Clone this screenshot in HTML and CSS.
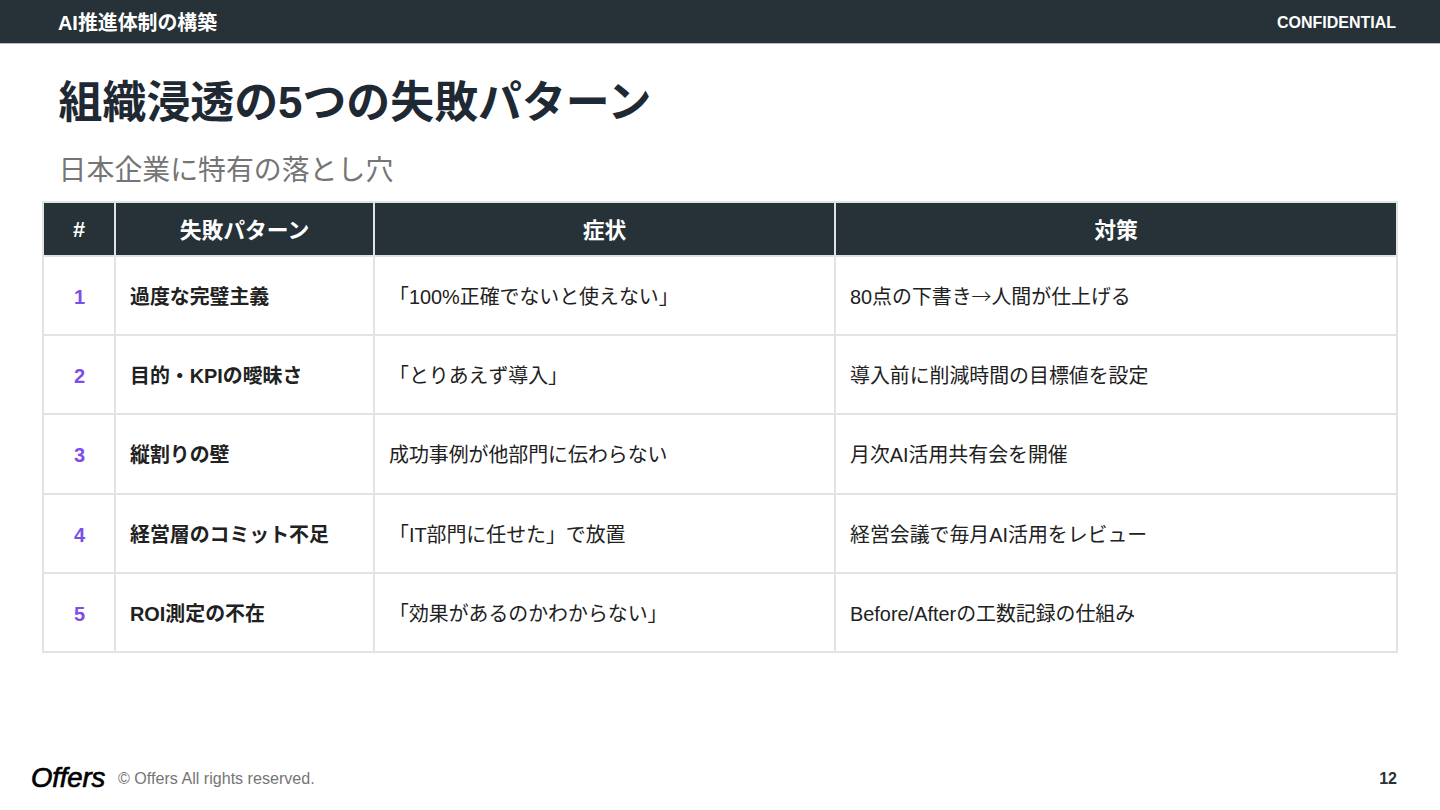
FILE: index.html
```html
<!DOCTYPE html>
<html lang="ja">
<head>
<meta charset="utf-8">
<title>組織浸透の5つの失敗パターン</title>
<link rel="stylesheet" href="styles.css">
</head>
<body>
<div class="slide">
  <header class="topbar">
    <span class="section">AI推進体制の構築</span>
    <span class="confidential">CONFIDENTIAL</span>
  </header>
  <main class="content">
    <h1 class="title">組織浸透の5つの失敗パターン</h1>
    <p class="subtitle">日本企業に特有の落とし穴</p>
    <table class="patterns">
      <colgroup>
        <col class="col-num"><col class="col-name"><col class="col-symptom"><col class="col-action">
      </colgroup>
      <thead>
        <tr><th class="hash">#</th><th>失敗パターン</th><th>症状</th><th>対策</th></tr>
      </thead>
      <tbody>
        <tr><td class="num">1</td><td class="name">過度な完璧主義</td><td>「100%正確でないと使えない」</td><td>80点の下書き<span class="arrow">→</span>人間が仕上げる</td></tr>
        <tr><td class="num">2</td><td class="name">目的・KPIの曖昧さ</td><td>「とりあえず導入」</td><td>導入前に削減時間の目標値を設定</td></tr>
        <tr><td class="num">3</td><td class="name">縦割りの壁</td><td>成功事例が他部門に伝わらない</td><td>月次AI活用共有会を開催</td></tr>
        <tr><td class="num">4</td><td class="name">経営層のコミット不足</td><td>「IT部門に任せた」で放置</td><td>経営会議で毎月AI活用をレビュー</td></tr>
        <tr><td class="num">5</td><td class="name">ROI測定の不在</td><td>「効果があるのかわからない」</td><td>Before/Afterの工数記録の仕組み</td></tr>
      </tbody>
    </table>
  </main>
  <footer class="footer">
    <span class="logo">Offers</span>
    <span class="copyright">© Offers All rights reserved.</span>
    <span class="page">12</span>
  </footer>
</div>
</body>
</html>
```

FILE: styles.css
```css
* { box-sizing: border-box; }
html, body { margin: 0; padding: 0; background: #fff; }
body { font-family: "Liberation Sans", "Noto Sans CJK JP", sans-serif; color: #1f2933; }
.slide { width: 1440px; height: 810px; display: flex; flex-direction: column; overflow: hidden; }
.topbar { height: 44px; flex: none; background: #263238; border-bottom: 1px solid #b8bec2; color: #fff; display: flex; align-items: center; justify-content: space-between; padding: 0 44px 0 58px; font-weight: 700; }
.section { font-size: 19.9px; }
.confidential { font-size: 16px; margin-top: 2px; }
.content { flex: 1; padding: 0 42px; }
.title { margin: 27px 0 0 16.6px; font-size: 43.9px; line-height: 64px; font-weight: 700; color: #1f2933; }
.subtitle { margin: 15px 0 0 16.6px; font-size: 27.9px; line-height: 42px; color: #757575; height: 51px; }
.patterns { width: 1354px; border-collapse: collapse; table-layout: fixed; }
.col-num { width: 72px; }
.col-name { width: 259px; }
.col-symptom { width: 461px; }
.col-action { width: 562px; }
.patterns th { height: 54px; background: #263238; color: #fff; font-size: 21.8px; font-weight: 700; text-align: center; border: 2px solid #dfe3e6; padding: 0 0 2px; }
.patterns th.hash { padding: 1px 0 0; }
.patterns td { height: 79.2px; font-size: 19.9px; padding: 0 14px; border: 2px solid #e3e3e3; color: #212121; }
.patterns td.num { text-align: center; font-size: 20px; font-weight: 700; color: #7c4dea; padding: 4px 0 0 1px; }
.patterns td.name { font-weight: 700; }
.arrow { font-family: "Noto Sans CJK JP", sans-serif; font-weight: 300; }
.footer { height: 62px; flex: none; display: flex; align-items: center; padding: 0 43px 0 31px; }
.logo { width: 87px; font-style: italic; font-weight: 400; font-size: 27.5px; color: #000; -webkit-text-stroke: 0.7px #000; letter-spacing: -0.1px; margin-bottom: 2px; }
.copyright { font-size: 16.1px; color: #757575; margin-bottom: 2px; }
.page { margin-left: auto; font-size: 16px; font-weight: 700; color: #263238; }
```
